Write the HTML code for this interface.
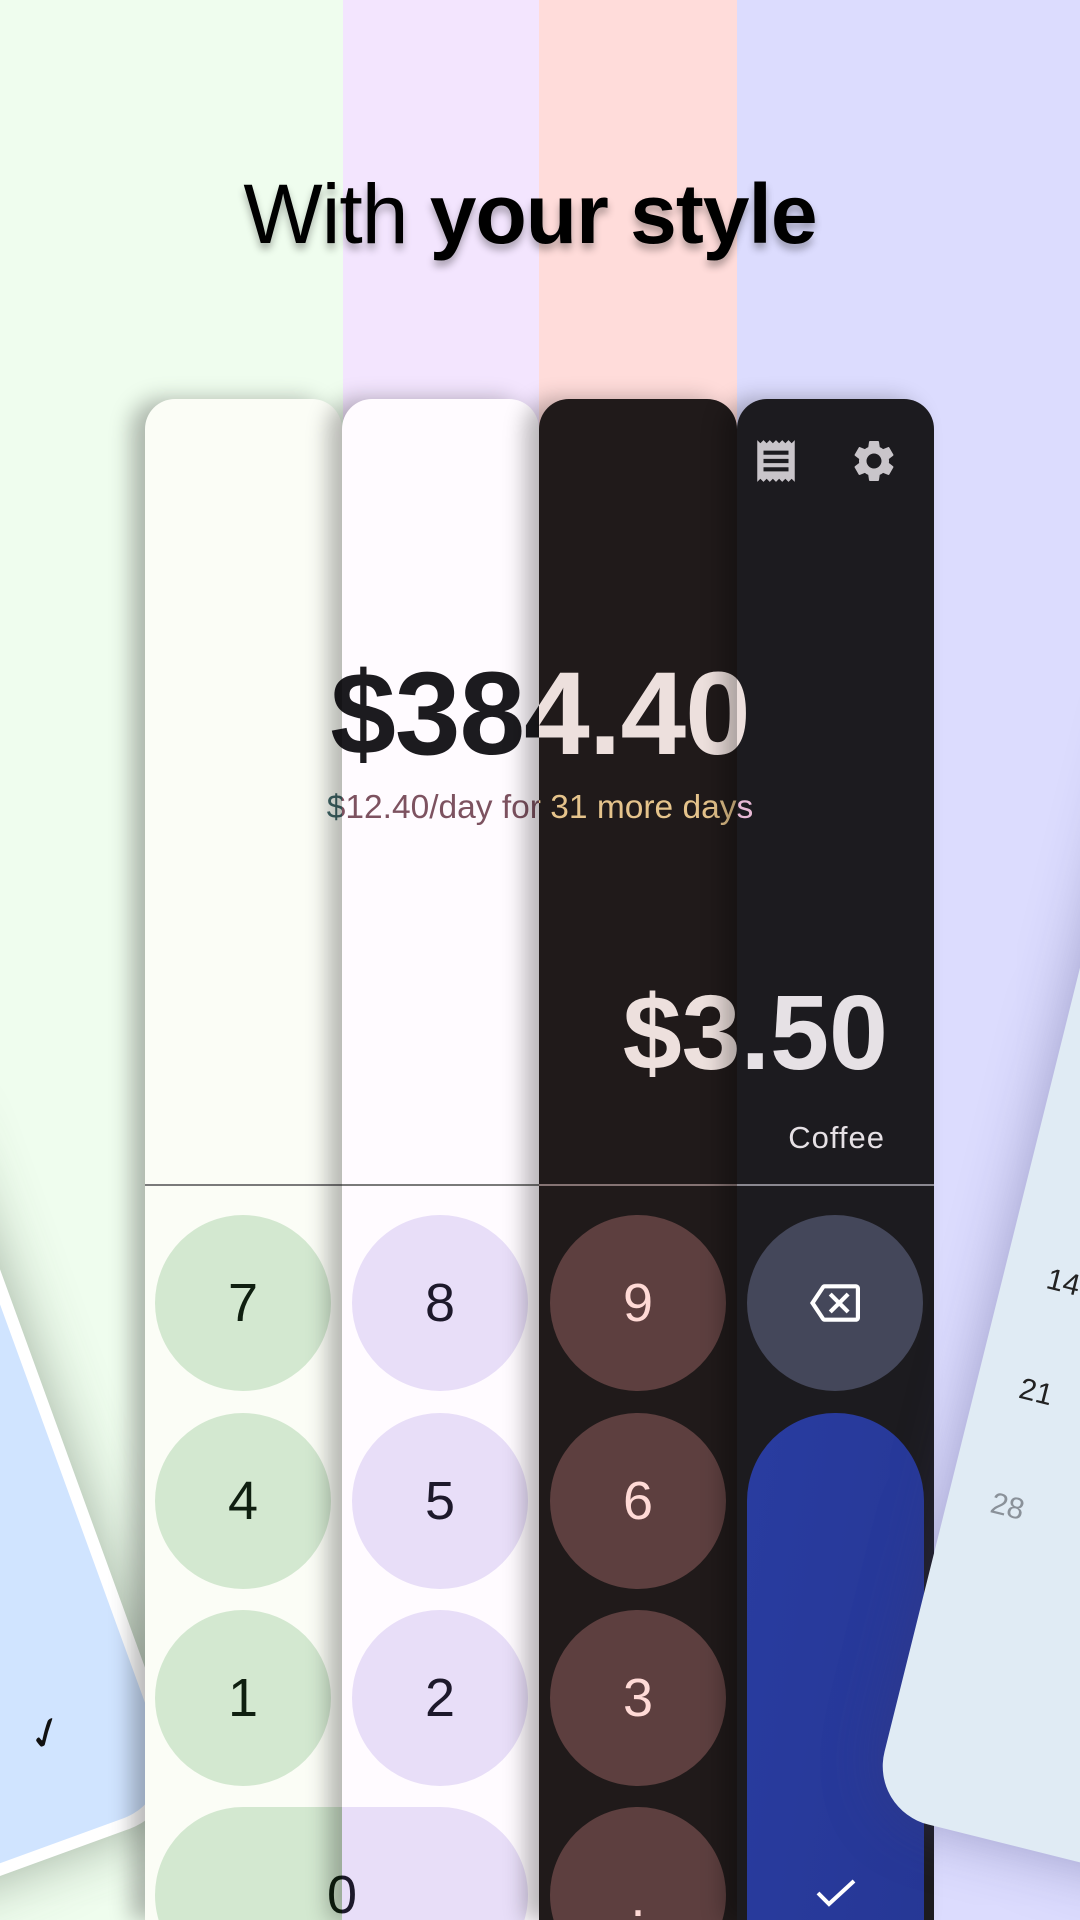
<!DOCTYPE html>
<html><head><meta charset="utf-8"><style>
*{margin:0;padding:0;box-sizing:border-box}
html,body{width:1080px;height:1920px;overflow:hidden}
body{position:relative;font-family:"Liberation Sans",sans-serif;background:#dcdcfe}
.s{position:absolute;top:0;height:1920px}
.card{position:absolute;top:399px;height:1521px;border-radius:30px 30px 0 0;overflow:hidden;box-shadow:-14px 0 22px rgba(0,0,0,0.28)}
.g{position:absolute;top:0;width:1080px;height:1521px}
.big{position:absolute;top:247px;left:0;width:1080px;text-align:center;font-weight:bold;font-size:118px;letter-spacing:-1px}
.sub{position:absolute;top:390px;left:0;width:1080px;text-align:center;font-size:33.5px}
.amt{position:absolute;top:574px;left:0;width:888px;text-align:right;font-weight:bold;font-size:106px}
.cof{position:absolute;top:721px;left:0;width:885px;text-align:right;font-size:31px;letter-spacing:1px}
.div{position:absolute;top:785px;left:0;width:1080px;height:2px;background:#7a7a7a}
.k{position:absolute;width:176px;height:176px;border-radius:50%;display:flex;align-items:center;justify-content:center;font-size:54px}
</style></head><body>
<div class="s" style="left:0;width:343px;background:#effdee"></div>
<div class="s" style="left:343px;width:196px;background:#f3e5fe"></div>
<div class="s" style="left:539px;width:198px;background:#ffdcda"></div>
<div class="s" style="left:737px;width:343px;background:#dcdcfe"></div>

<div style="position:absolute;top:166px;left:-10px;width:1080px;text-align:center;font-size:84px;color:#000;text-shadow:0 6px 8px rgba(0,0,0,0.3);letter-spacing:-1px">With <b>your style</b></div>

<div style="position:absolute;left:-405px;top:605px;width:600px;height:1200px;transform-origin:100% 100%;transform:rotate(-20deg);background:#fff;border-radius:70px;padding:12px;box-shadow:0 0 60px rgba(60,80,60,0.45)">
<div style="width:100%;height:100%;background:#d0e4ff;border-radius:60px;position:relative">
<div style="position:absolute;right:85px;bottom:80px;font-size:44px;color:#111">✓</div></div></div>

<div class="card" style="left:145px;width:197px;background:#fbfdf6;z-index:1">
<div class="g" style="left:-145px">
<div class="big" style="color:#1c1b1f">$384.40</div>
<div class="sub" style="color:#3f6566">$12.40/day for 31 more days</div>
<div class="div"></div>
<div class="k" style="left:155px;top:816px;background:#d3e8d0;color:#0f1f10">7</div>
<div class="k" style="left:155px;top:1014px;background:#d3e8d0;color:#0f1f10">4</div>
<div class="k" style="left:155px;top:1211px;background:#d3e8d0;color:#0f1f10">1</div>
<div style="position:absolute;left:155px;top:1408px;width:300px;height:176px;border-radius:88px;background:#d3e8d0"></div>
<div style="position:absolute;left:0;top:1465px;width:684px;text-align:center;font-size:54px;color:#0f1f10">0</div>
</div></div>
<div class="card" style="left:342px;width:197px;background:#fffbff;z-index:2">
<div class="g" style="left:-342px">
<div class="big" style="color:#1c1b1f">$384.40</div>
<div class="sub" style="color:#7d5260">$12.40/day for 31 more days</div>
<div class="div"></div>
<div class="k" style="left:352px;top:816px;background:#e8def8;color:#1d192b">8</div>
<div class="k" style="left:352px;top:1014px;background:#e8def8;color:#1d192b">5</div>
<div class="k" style="left:352px;top:1211px;background:#e8def8;color:#1d192b">2</div>
<div style="position:absolute;left:200px;top:1408px;width:328px;height:176px;border-radius:88px;background:#e8def8"></div>
<div style="position:absolute;left:0;top:1465px;width:684px;text-align:center;font-size:54px;color:#1d192b">0</div>
</div></div>
<div class="card" style="left:539px;width:198px;background:#201a1a;z-index:3">
<div class="g" style="left:-539px">
<div class="big" style="color:#ede0dd">$384.40</div>
<div class="sub" style="color:#e5c38b">$12.40/day for 31 more days</div>
<div class="amt" style="color:#ede0dd">$3.50</div>
<div class="div" style="background:#857373"></div>
<div class="k" style="left:550px;top:816px;background:#5d3f3f;color:#ffdad6">9</div>
<div class="k" style="left:550px;top:1014px;background:#5d3f3f;color:#ffdad6">6</div>
<div class="k" style="left:550px;top:1211px;background:#5d3f3f;color:#ffdad6">3</div>
<div class="k" style="left:550px;top:1408px;background:#5d3f3f;color:#ffdad6;align-items:flex-start;padding-top:60px">.</div>
</div></div>
<div class="card" style="left:737px;width:197px;background:#1c1b1f;z-index:4">
<div class="g" style="left:-737px">
<svg style="position:absolute;left:751px;top:37px" width="50" height="50" viewBox="0 0 24 24"><path fill="#c9c5ca" d="M18 17H6v-2h12v2zm0-4H6v-2h12v2zm0-4H6V7h12v2zM3 22l1.5-1.5L6 22l1.5-1.5L9 22l1.5-1.5L12 22l1.5-1.5L15 22l1.5-1.5L18 22l1.5-1.5L21 22V2l-1.5 1.5L18 2l-1.5 1.5L15 2l-1.5 1.5L12 2l-1.5 1.5L9 2 7.5 3.5 6 2 4.5 3.5 3 2v20z"/></svg>
<svg style="position:absolute;left:849px;top:37px" width="50" height="50" viewBox="0 0 24 24"><path fill="#c9c5ca" d="M19.14,12.94c0.04-0.3,0.06-0.61,0.06-0.94c0-0.32-0.02-0.64-0.07-0.94l2.03-1.58c0.18-0.14,0.23-0.41,0.12-0.61l-1.92-3.32c-0.12-0.22-0.37-0.29-0.59-0.22l-2.39,0.96c-0.5-0.38-1.030-0.7-1.62-0.94L14.4,2.81c-0.04-0.24-0.24-0.41-0.48-0.41h-3.84c-0.24,0-0.43,0.17-0.47,0.41L9.25,5.35C8.66,5.590,8.12,5.92,7.63,6.29L5.24,5.33c-0.22-0.08-0.47,0-0.59,0.22L2.74,8.87C2.62,9.08,2.66,9.34,2.86,9.48l2.03,1.58C4.84,11.36,4.8,11.69,4.8,12s0.02,0.64,0.07,0.94l-2.03,1.58c-0.18,0.14-0.23,0.41-0.12,0.61l1.92,3.32c0.12,0.22,0.37,0.29,0.59,0.22l2.39-0.96c0.5,0.38,1.03,0.7,1.62,0.94l0.36,2.54c0.05,0.24,0.24,0.41,0.48,0.41h3.84c0.24,0,0.44-0.17,0.47-0.41l0.36-2.54c0.59-0.24,1.13-0.56,1.62-0.94l2.39,0.96c0.22,0.08,0.47,0,0.59-0.22l1.92-3.32c0.12-0.22,0.07-0.47-0.12-0.61L19.14,12.94z M12,15.6c-1.98,0-3.6-1.62-3.6-3.6s1.62-3.6,3.6-3.6s3.6,1.62,3.6,3.6S13.98,15.6,12,15.6z"/></svg>
<div class="big" style="color:#ede0dd">$384.40</div>
<div class="sub" style="color:#e8b9d5">$12.40/day for 31 more days</div>
<div class="amt" style="color:#e6e1e5">$3.50</div>
<div class="cof" style="color:#e6e1e5">Coffee</div>
<div class="div" style="background:#8a8890"></div>
<div class="k" style="left:747px;top:816px;background:#44475a"><svg width="50" height="50" viewBox="0 0 24 24"><path fill="#fff" d="M22 3H7c-.69 0-1.23.35-1.59.88L0 12l5.41 8.11c.36.53.9.89 1.59.89h15c1.1 0 2-.9 2-2V5c0-1.1-.9-2-2-2zm0 16H7.07L2.4 12l4.66-7H22v14zm-11.59-2L14 13.41 17.59 17 19 15.590 15.41 12 19 8.41 17.59 7 14 10.59 10.41 7 9 8.41 12.59 12 9 15.59z"/></svg></div>
<div style="position:absolute;left:747px;top:1014px;width:177px;height:600px;border-radius:88px;background:linear-gradient(100deg,#293ca0,#263795)"></div>
<svg style="position:absolute;left:815px;top:1479px" width="42" height="30" viewBox="0 0 42 30"><path d="M3 15l11 11L39 3" fill="none" stroke="#fff" stroke-width="4"/></svg>
</div></div>

<div style="position:absolute;left:870px;top:610px;width:600px;height:1200px;transform-origin:0 100%;transform:rotate(14deg);background:#e0ebf4;border-radius:60px;box-shadow:0 0 60px rgba(60,60,120,0.4);z-index:5">
<div style="position:absolute;left:30px;top:625px;width:60px;text-align:center;font-size:30px;color:#222">14</div>
<div style="position:absolute;left:30px;top:738px;width:60px;text-align:center;font-size:30px;color:#222">21</div>
<div style="position:absolute;left:30px;top:856px;width:60px;text-align:center;font-size:30px;color:#8a9199">28</div>
</div>
</body></html>
